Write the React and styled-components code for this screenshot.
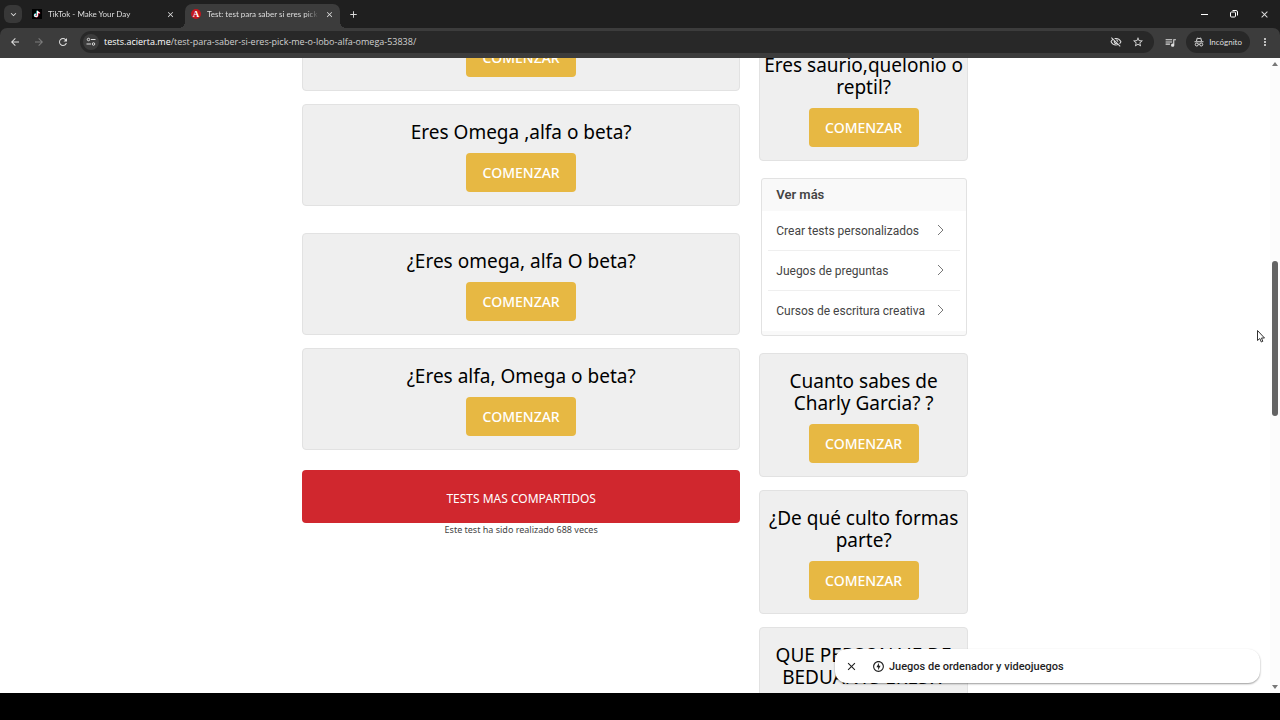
import styled, { createGlobalStyle } from "styled-components";
import {
  MdArrowBack,
  MdArrowForward,
  MdRefresh,
  MdKeyboardArrowDown,
  MdClose,
  MdAdd,
  MdOutlineVisibilityOff,
  MdStarBorder,
  MdQueueMusic,
  MdMoreVert,
  MdOutlineOfflineBolt,
} from "react-icons/md";

const GlobalStyle = createGlobalStyle`
  * {
    box-sizing: border-box;
  }

  body {
    margin: 0;
    background: #000;
    font-family: "Noto Sans", "Open Sans", sans-serif;
  }

  button {
    border: 0;
    padding: 0;
    background: none;
    color: inherit;
    font: inherit;
    cursor: pointer;
  }

  svg {
    display: block;
    flex: none;
  }
`;

const Screen = styled.div`
  display: flex;
  flex-direction: column;
  height: 100vh;
  padding-bottom: 27px;
  overflow: hidden;
`;

// Browser chrome

const Chrome = styled.header`
  flex: none;
  background: #1f1f1f;
  color: #dedede;
`;

const TabBar = styled.div`
  display: flex;
  align-items: center;
  height: 28px;
  padding-left: 4px;
`;

const TabSearch = styled.button`
  display: grid;
  place-items: center;
  width: 18px;
  height: 18px;
  border-radius: 6px;
  background: #383838;
`;

const Tab = styled.div`
  display: flex;
  align-items: center;
  align-self: flex-end;
  gap: 6px;
  width: 163px;
  height: 24px;
  padding: 0 10px 4px;
  font-family: Lato, sans-serif;
  font-size: 8px;
  line-height: 12px;
`;

const ActiveTab = styled(Tab)`
  position: relative;
  width: 155px;
  padding: 0 6px 4px;
  border-radius: 7px 7px 0 0;
  background: #3c3c3c;

  &::before,
  &::after {
    content: "";
    position: absolute;
    bottom: 0;
    width: 6px;
    height: 6px;
  }

  &::before {
    right: 100%;
    background: radial-gradient(circle at 0 0, transparent 6px, #3c3c3c 6px);
  }

  &::after {
    left: 100%;
    background: radial-gradient(circle at 100% 0, transparent 6px, #3c3c3c 6px);
  }
`;

const TabTitle = styled.span`
  flex: 1;
  min-width: 0;
  overflow: hidden;
  white-space: nowrap;
  mask-image: linear-gradient(to right, #000 88%, transparent);
`;

const LetterIcon = styled.span`
  width: 10px;
  height: 10px;
  border-radius: 5px;
  background: #c4161f;
  color: #fff;
  font: bold 9px/10px "Liberation Serif", serif;
  text-align: center;
`;

const NewTab = styled.button`
  margin-left: 8px;
`;

const WindowButtons = styled.div`
  display: flex;
  align-items: center;
  gap: 21px;
  margin: 0 10px 0 auto;
`;

const Toolbar = styled.div`
  display: flex;
  align-items: center;
  height: 30px;
  padding: 0 9px 2px;
  border-radius: 7px 7px 0 0;
  background: #3c3c3c;
`;

const NavButtons = styled.div`
  display: flex;
  gap: 12px;
`;

const NavButton = styled.button`
  color: ${({ $dim }) => ($dim ? "#7c7c7c" : "#dedede")};
`;

const AddressBar = styled.div`
  display: flex;
  align-items: center;
  flex: 1;
  gap: 5px;
  height: 22px;
  margin-left: 11px;
  padding: 0 10px 0 3px;
  border-radius: 11px;
  background: #282828;
`;

const SiteInfo = styled.button`
  display: grid;
  place-items: center;
  width: 16px;
  height: 16px;
  border-radius: 8px;
  background: #3c3c3c;
`;

const Url = styled.span`
  flex: 1;
  color: #d0d0d0;
  font-family: "Open Sans", sans-serif;
  font-size: 9px;
  line-height: 14px;

  b {
    color: #fff;
    font-weight: 500;
  }
`;

const AddressActions = styled.div`
  display: flex;
  gap: 10px;
`;

const MusicButton = styled.button`
  margin: 0 9px 0 10px;
`;

const Incognito = styled.button`
  display: flex;
  align-items: center;
  gap: 5px;
  height: 22px;
  margin-right: 9px;
  padding: 0 8px;
  border-radius: 11px;
  background: #282828;
  font-family: Lato, sans-serif;
  font-size: 8px;
`;

// Page

const Viewport = styled.div`
  position: relative;
  display: flex;
  flex: 1;
  min-height: 0;
  background: #fff;
`;

const Page = styled.main`
  flex: 1;
  overflow: hidden;
`;

const Content = styled.div`
  display: grid;
  grid-template-columns: 21fr 10fr;
  align-items: start;
  gap: 19px;
  max-width: 666px;
  margin: 0 auto;
`;

// The page is scrolled down, so each column starts above the visible area.
const Column = styled.div`
  margin-top: -${({ $scrolled }) => $scrolled}px;
`;

const Card = styled.article`
  display: flex;
  flex-direction: column;
  align-items: center;
  gap: 10px;
  margin-bottom: ${({ $space = 13 }) => $space}px;
  padding: 16px 3px 13px;
  border: 1px solid #e2e2e2;
  border-radius: 4px;
  background: #efefef;
`;

const CardTitle = styled.h2`
  margin: 0;
  color: #000;
  font-size: 19px;
  font-weight: 400;
  line-height: 22px;
  text-align: center;
`;

const StartButton = styled.button`
  width: 110px;
  height: 39px;
  border-radius: 4px;
  background: #e7b843;
  color: #fff;
  font-size: 14px;
  font-weight: 500;
`;

const SharedBanner = styled.button`
  display: block;
  width: 100%;
  height: 53px;
  padding-top: 4px;
  border-radius: 4px;
  background: #d0272e;
  color: #fff;
  font-size: 12px;
`;

const Taken = styled.p`
  margin: 0;
  color: #444;
  font-size: 9px;
  line-height: 14px;
  text-align: center;
`;

const MorePanel = styled.nav`
  margin: 17px 1px 17px 2px;
  border: 1px solid #e2e2e2;
  border-radius: 3px;
  background: #f9f9f9;
  color: #444;
  font-family: Roboto, sans-serif;
  font-size: 12px;
`;

const MoreHeading = styled.h3`
  margin: 0;
  padding: 0 14px;
  font-size: 13px;
  font-weight: 600;
  line-height: 32px;
`;

const MoreList = styled.ul`
  margin: 0 0 4px;
  padding: 0 6px;
  background: #fff;
  list-style: none;
`;

const MoreItem = styled.li`
  border-bottom: 1px solid #efefef;

  &:last-child {
    border-color: #fff;
  }
`;

const MoreLink = styled.a`
  display: flex;
  align-items: center;
  justify-content: space-between;
  height: 39px;
  padding: 0 16px 0 8px;
  color: inherit;
  text-decoration: none;
  white-space: nowrap;
`;

const Scrollbar = styled.div`
  display: flex;
  flex-direction: column;
  align-items: center;
  flex: none;
  width: 10px;
  padding: 4px 0;
  background: #fcfcfc;
`;

const Track = styled.div`
  display: grid;
  grid-template-rows: 194fr 154fr 267fr;
  flex: 1;
`;

const Thumb = styled.div`
  grid-row: 2;
  width: 6px;
  border-radius: 3px;
  background: #636363;
`;

const AdBar = styled.aside`
  position: absolute;
  right: 20px;
  bottom: 10px;
  display: flex;
  align-items: center;
  width: 425px;
  height: 34px;
  padding-left: 10px;
  border-radius: 12px;
  background: #fff;
  box-shadow: 0 1px 2px rgba(0, 0, 0, 0.4);
  color: #1f1f1f;
`;

const AdLink = styled.a`
  display: flex;
  align-items: center;
  gap: 4px;
  margin-left: 14px;
  color: inherit;
  font-family: Roboto, sans-serif;
  font-size: 11px;
  font-weight: 500;
  text-decoration: none;
`;

const Pointer = styled.svg`
  position: absolute;
  top: 272px;
  right: 15px;
`;

const TikTokIcon = () => (
  <svg width="10" height="10" viewBox="0 0 22 22">
    <rect width="22" height="22" fill="#000" />
    <g fill="none" strokeWidth="2.4">
      <path d="M11 4v9.500a3 3 0 1 1-3-3M11 4c.5 2.500 2 4 5 4" stroke="#25f4ee" />
      <path d="M13 5v9.500a3 3 0 1 1-3-3M13 5c.5 2.500 2 4 5 4" stroke="#fe2c55" />
      <path d="M12 4v10a3 3 0 1 1-3-3M12 4c.5 2.700 2 4.300 5 4.300" stroke="#fff" />
    </g>
  </svg>
);

const TuneIcon = () => (
  <svg width="10" height="10" viewBox="0 0 20 20" fill="none" stroke="#dedede" strokeWidth="2">
    <circle cx="5" cy="5" r="2.500" />
    <path d="M10 5h9M1 14h9" />
    <circle cx="15" cy="14" r="2.500" />
  </svg>
);

const SpyIcon = () => (
  <svg width="10" height="10" viewBox="0 0 20 20" fill="none" stroke="currentColor" strokeWidth="2">
    <path d="M5 8l1.500-6 3.500 1.200L13.500 2 15 8M1 9.500h18" />
    <circle cx="5.500" cy="15" r="3" />
    <circle cx="14.500" cy="15" r="3" />
    <path d="M8.500 14.500q1.500-1 3 0" />
  </svg>
);

const MinimizeIcon = () => (
  <svg width="8" height="8" viewBox="0 0 8 8" stroke="#fff">
    <path d="M0 4.500h7" />
  </svg>
);

const RestoreIcon = () => (
  <svg width="8" height="8" viewBox="0 0 8 8" fill="none" stroke="#fff">
    <rect x="0.500" y="2" width="5" height="5" rx="1" />
    <path d="M2.500 .5h3.500a1.500 1.500 0 0 1 1.500 1.500v3.500" />
  </svg>
);

const Chevron = () => (
  <svg width="7" height="12" viewBox="0 0 7 12" fill="none" stroke="#777">
    <path d="M1 0l5 5-5 5" />
  </svg>
);

const ScrollArrow = ({ down }) => (
  <svg width="6" height="4" viewBox="0 0 6 4" fill="#777">
    <path d={down ? "M0 0h6L3 4z" : "M0 4h6L3 0z"} />
  </svg>
);

const TestCard = ({ title, space }) => (
  <Card $space={space}>
    <CardTitle>{title}</CardTitle>
    <StartButton type="button">COMENZAR</StartButton>
  </Card>
);

// space is the gap that follows the card
const mainTests = [
  { id: 1, title: "¿Eres alfa o beta?" },
  { id: 2, title: "Eres Omega ,alfa o beta?", space: 27 },
  { id: 3, title: "¿Eres omega, alfa O beta?" },
  { id: 4, title: "¿Eres alfa, Omega o beta?", space: 20 },
];

const sideTests = [
  { id: 5, title: "Cuanto sabes de Charly Garcia? ?" },
  { id: 6, title: "¿De qué culto formas parte?" },
  { id: 7, title: "QUE PERSONAJE DE BEDUANTS ERES??" },
];

const moreLinks = ["Crear tests personalizados", "Juegos de preguntas", "Cursos de escritura creativa"];

const App = () => {
  return (
    <Screen>
      <GlobalStyle />
      <Chrome>
        <TabBar>
          <TabSearch type="button" aria-label="Buscar pestañas">
            <MdKeyboardArrowDown size={11} />
          </TabSearch>
          <Tab>
            <TikTokIcon />
            <TabTitle>TikTok - Make Your Day</TabTitle>
            <button type="button" aria-label="Cerrar pestaña">
              <MdClose size={9} />
            </button>
          </Tab>
          <ActiveTab>
            <LetterIcon>A</LetterIcon>
            <TabTitle>Test: test para saber si eres pick me</TabTitle>
            <button type="button" aria-label="Cerrar pestaña">
              <MdClose size={9} />
            </button>
          </ActiveTab>
          <NewTab type="button" aria-label="Nueva pestaña">
            <MdAdd size={11} />
          </NewTab>
          <WindowButtons>
            <button type="button" aria-label="Minimizar">
              <MinimizeIcon />
            </button>
            <button type="button" aria-label="Restaurar">
              <RestoreIcon />
            </button>
            <button type="button" aria-label="Cerrar">
              <MdClose size={11} />
            </button>
          </WindowButtons>
        </TabBar>

        <Toolbar>
          <NavButtons>
            <NavButton type="button" aria-label="Atrás">
              <MdArrowBack size={12} />
            </NavButton>
            <NavButton type="button" aria-label="Adelante" $dim>
              <MdArrowForward size={12} />
            </NavButton>
            <NavButton type="button" aria-label="Recargar">
              <MdRefresh size={12} />
            </NavButton>
          </NavButtons>
          <AddressBar>
            <SiteInfo type="button" aria-label="Información del sitio">
              <TuneIcon />
            </SiteInfo>
            <Url>
              <b>tests.acierta.me</b>/test-para-saber-si-eres-pick-me-o-lobo-alfa-omega-53838/
            </Url>
            <AddressActions>
              <MdOutlineVisibilityOff size={12} />
              <MdStarBorder size={12} />
            </AddressActions>
          </AddressBar>
          <MusicButton type="button" aria-label="Controles multimedia">
            <MdQueueMusic size={13} />
          </MusicButton>
          <Incognito type="button">
            <SpyIcon />
            Incógnito
          </Incognito>
          <button type="button" aria-label="Menú">
            <MdMoreVert size={12} />
          </button>
        </Toolbar>
      </Chrome>

      <Viewport>
        <Page>
          <Content>
            <Column $scrolled={69}>
              {mainTests.map((test) => (
                <TestCard key={test.id} title={test.title} space={test.space} />
              ))}
              <SharedBanner type="button">TESTS MAS COMPARTIDOS</SharedBanner>
              <Taken>Este test ha sido realizado 688 veces</Taken>
            </Column>
            <Column $scrolled={21}>
              <TestCard title="Eres saurio,quelonio o reptil?" space={17} />
              <MorePanel>
                <MoreHeading>Ver más</MoreHeading>
                <MoreList>
                  {moreLinks.map((label) => (
                    <MoreItem key={label}>
                      <MoreLink href="#">
                        {label}
                        <Chevron />
                      </MoreLink>
                    </MoreItem>
                  ))}
                </MoreList>
              </MorePanel>
              {sideTests.map((test) => (
                <TestCard key={test.id} title={test.title} />
              ))}
            </Column>
          </Content>
        </Page>
        <Scrollbar>
          <ScrollArrow />
          <Track>
            <Thumb />
          </Track>
          <ScrollArrow down />
        </Scrollbar>
        <AdBar>
          <button type="button" aria-label="Cerrar anuncio">
            <MdClose size={13} />
          </button>
          <AdLink href="#">
            <MdOutlineOfflineBolt size={13} />
            Juegos de ordenador y videojuegos
          </AdLink>
        </AdBar>
        <Pointer width="8" height="13" viewBox="0 0 8 13" fill="#fff" stroke="#333">
          <path d="M.5.5v10l2.300-2 1.500 3.500 1.500-.7L4.500 8h3z" />
        </Pointer>
      </Viewport>
    </Screen>
  );
};

export default App;
